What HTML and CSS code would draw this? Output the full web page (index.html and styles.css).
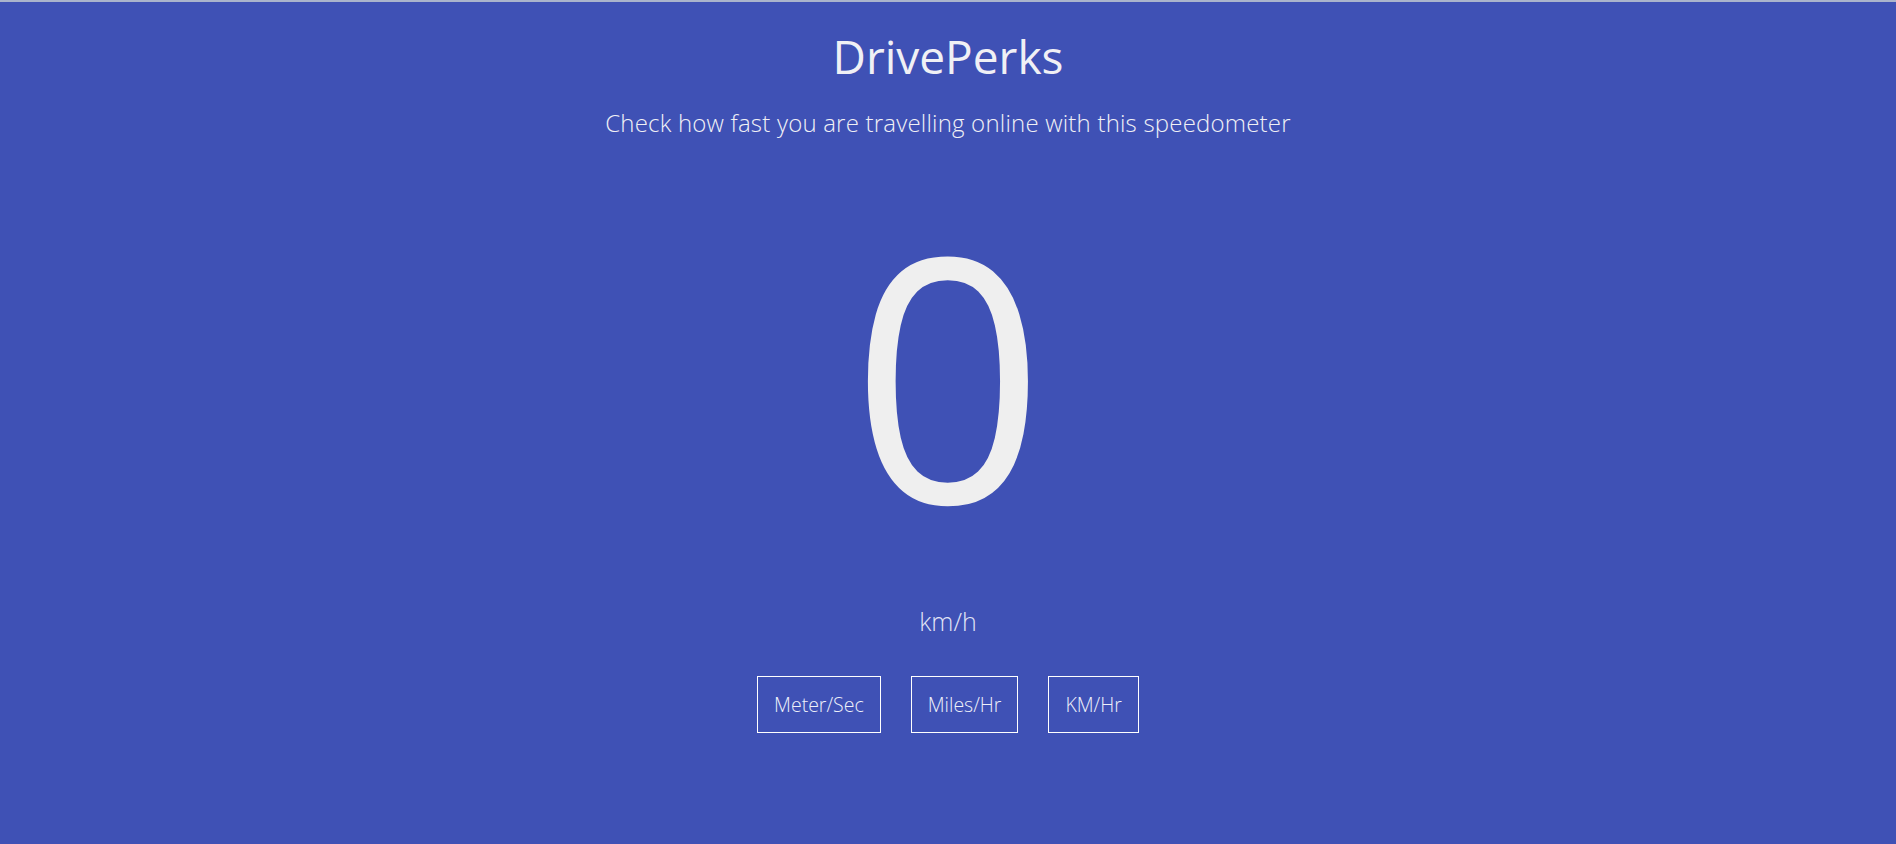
FILE: index.html
```html
<!DOCTYPE html>
<html lang="en">
<head>
<meta charset="utf-8">
<title>DrivePerks</title>
<link rel="stylesheet" href="styles.css">
</head>
<body>
<main class="page">
  <h1 class="title">DrivePerks</h1>
  <p class="subtitle">Check how fast you are travelling online with this speedometer</p>
  <div class="speed">0</div>
  <div class="unit">km/h</div>
  <div class="buttons">
    <button class="btn">Meter/Sec</button>
    <button class="btn">Miles/Hr</button>
    <button class="btn">KM/Hr</button>
  </div>
</main>
</body>
</html>
```

FILE: styles.css
```css
html, body {
  margin: 0;
  padding: 0;
  height: 100%;
}
body {
  background: #3f51b5;
  border-top: 2px solid #aab4cc;
  box-sizing: border-box;
  font-family: "Open Sans", "Noto Sans", sans-serif;
  font-weight: 300;
  color: #f0f0f5;
}
.page {
  display: flex;
  flex-direction: column;
  align-items: center;
  text-align: center;
}
.title {
  margin: 22px 0 0;
  font-size: 46px;
  font-weight: 400;
  line-height: 64px;
}
.subtitle {
  margin: 19px 0 0;
  font-size: 24px;
  line-height: 32px;
  letter-spacing: 0.2px;
}
.speed {
  margin-top: 1px;
  font-size: 340px;
  line-height: 464px;
  font-weight: 400;
  color: #efefef;
}
.unit {
  margin-top: 1px;
  font-size: 25px;
  line-height: 32px;
  color: #e2e4f6;
}
.buttons {
  display: flex;
  gap: 30px;
  margin-top: 39px;
}
.btn {
  background: transparent;
  border: 1px solid #ffffff;
  color: #eef0fa;
  font-family: inherit;
  font-weight: 300;
  font-size: 19.5px;
  line-height: 22px;
  padding: 16.5px 16px;
  cursor: pointer;
}
```
